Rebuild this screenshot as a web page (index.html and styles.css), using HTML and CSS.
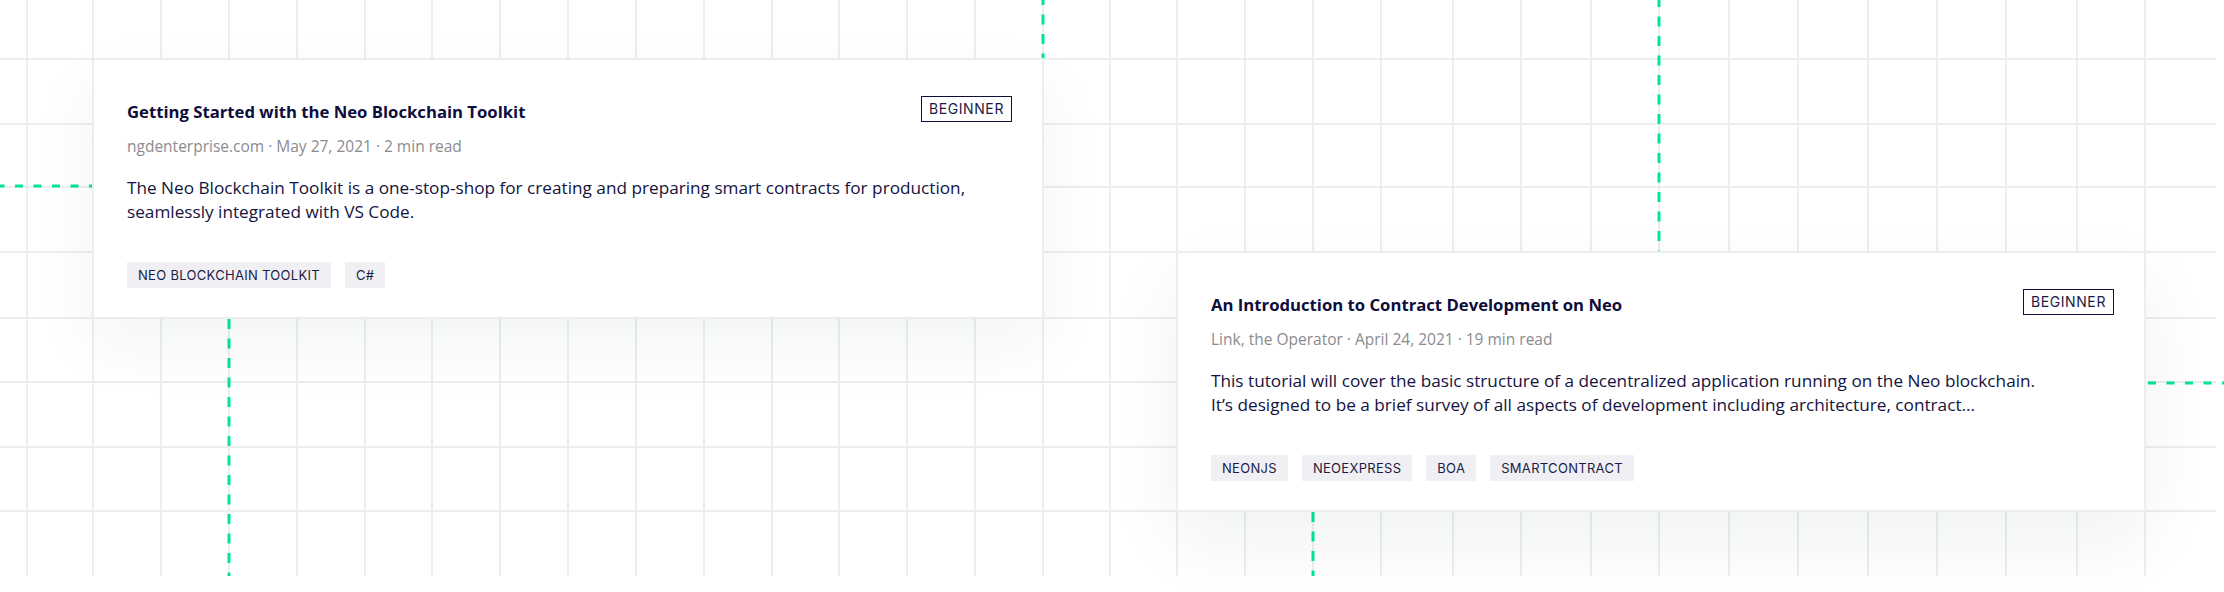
FILE: index.html
```html
<!DOCTYPE html>
<html lang="en">
<head>
<meta charset="utf-8">
<title>Neo tutorials</title>
<link rel="stylesheet" href="styles.css">
</head>
<body>
<main class="stage">
  <svg class="backdrop" width="2224" height="592" viewBox="0 0 2224 592" aria-hidden="true">
    <g class="grid-v" stroke="#eaeeee" stroke-width="2">
      <line x1="27" y1="0" x2="27" y2="576"/>
      <line x1="93" y1="0" x2="93" y2="576"/>
      <line x1="161" y1="0" x2="161" y2="576"/>
      <line x1="229" y1="0" x2="229" y2="576"/>
      <line x1="297" y1="0" x2="297" y2="576"/>
      <line x1="365" y1="0" x2="365" y2="576"/>
      <line x1="432" y1="0" x2="432" y2="576"/>
      <line x1="500" y1="0" x2="500" y2="576"/>
      <line x1="568" y1="0" x2="568" y2="576"/>
      <line x1="636" y1="0" x2="636" y2="576"/>
      <line x1="704" y1="0" x2="704" y2="576"/>
      <line x1="772" y1="0" x2="772" y2="576"/>
      <line x1="839" y1="0" x2="839" y2="576"/>
      <line x1="907" y1="0" x2="907" y2="576"/>
      <line x1="975" y1="0" x2="975" y2="576"/>
      <line x1="1043" y1="0" x2="1043" y2="576"/>
      <line x1="1110" y1="0" x2="1110" y2="576"/>
      <line x1="1177" y1="0" x2="1177" y2="576"/>
      <line x1="1245" y1="0" x2="1245" y2="576"/>
      <line x1="1313" y1="0" x2="1313" y2="576"/>
      <line x1="1381" y1="0" x2="1381" y2="576"/>
      <line x1="1453" y1="0" x2="1453" y2="576"/>
      <line x1="1521" y1="0" x2="1521" y2="576"/>
      <line x1="1591" y1="0" x2="1591" y2="576"/>
      <line x1="1659" y1="0" x2="1659" y2="576"/>
      <line x1="1729" y1="0" x2="1729" y2="576"/>
      <line x1="1798" y1="0" x2="1798" y2="576"/>
      <line x1="1868" y1="0" x2="1868" y2="576"/>
      <line x1="1937" y1="0" x2="1937" y2="576"/>
      <line x1="2006" y1="0" x2="2006" y2="576"/>
      <line x1="2077" y1="0" x2="2077" y2="576"/>
      <line x1="2145" y1="0" x2="2145" y2="576"/>
    </g>
    <g class="grid-h" stroke="#eaeeee" stroke-width="2">
      <line x1="0" y1="59" x2="2216" y2="59"/>
      <line x1="0" y1="124" x2="2216" y2="124"/>
      <line x1="0" y1="187" x2="2216" y2="187"/>
      <line x1="0" y1="252" x2="2216" y2="252"/>
      <line x1="0" y1="318" x2="2216" y2="318"/>
      <line x1="0" y1="382" x2="2216" y2="382"/>
      <line x1="0" y1="447" x2="2216" y2="447"/>
      <line x1="0" y1="511" x2="2216" y2="511"/>
    </g>
    <g class="dashes" stroke="#00e599" stroke-width="3" fill="none">
      <line x1="93" y1="186" x2="0" y2="186" stroke-dasharray="8 10.5" stroke-dashoffset="4"/>
      <line x1="1043" y1="0" x2="1043" y2="59" stroke-dasharray="10 9.5" stroke-dashoffset="5"/>
      <line x1="229" y1="318" x2="229" y2="576" stroke-dasharray="10 9.5" stroke-dashoffset="-1"/>
      <line x1="1659" y1="0" x2="1659" y2="252" stroke-dasharray="10 9.5" stroke-dashoffset="3"/>
      <line x1="2146" y1="383" x2="2224" y2="383" stroke-dasharray="8 10.5" stroke-dashoffset="-2"/>
      <line x1="1313" y1="512" x2="1313" y2="576" stroke-dasharray="10 9.5" stroke-dashoffset="0"/>
    </g>
  </svg>

  <article class="card card-one">
    <header class="card-head">
      <h2 class="card-title">Getting Started with the Neo Blockchain Toolkit</h2>
      <span class="level">BEGINNER</span>
    </header>
    <p class="card-meta">ngdenterprise.com · May 27, 2021 · 2 min read</p>
    <p class="card-desc">The Neo Blockchain Toolkit is a one-stop-shop for creating and preparing smart contracts for production,<br>seamlessly integrated with VS Code.</p>
    <ul class="tags">
      <li class="tag">NEO BLOCKCHAIN TOOLKIT</li>
      <li class="tag">C#</li>
    </ul>
  </article>

  <article class="card card-two">
    <header class="card-head">
      <h2 class="card-title">An Introduction to Contract Development on Neo</h2>
      <span class="level">BEGINNER</span>
    </header>
    <p class="card-meta">Link, the Operator · April 24, 2021 · 19 min read</p>
    <p class="card-desc">This tutorial will cover the basic structure of a decentralized application running on the Neo blockchain.<br>It’s designed to be a brief survey of all aspects of development including architecture, contract...</p>
    <ul class="tags">
      <li class="tag">NEONJS</li>
      <li class="tag">NEOEXPRESS</li>
      <li class="tag">BOA</li>
      <li class="tag">SMARTCONTRACT</li>
    </ul>
  </article>
</main>
</body>
</html>
```

FILE: styles.css
```css
* { box-sizing: border-box; }

html, body {
  margin: 0;
  padding: 0;
  background: #ffffff;
}

body {
  font-family: "Open Sans", "Noto Sans", sans-serif;
  color: #0f0e3c;
}

.stage {
  position: relative;
  width: 2224px;
  height: 592px;
  overflow: hidden;
  display: grid;
  grid-template-columns: 92px 952px 132px 970px 1fr;
  grid-template-rows: 58px 193px 68px 193px 1fr;
}

.backdrop {
  position: absolute;
  left: 0;
  top: 0;
  z-index: 0;
  display: block;
}

.card {
  position: relative;
  z-index: 1;
  background: #ffffff;
  border: 2px solid #eaeeee;
  box-shadow: 0 26px 64px rgba(20, 30, 40, 0.05);
  padding: 34px 30px 0 33px;
}

.card-one {
  grid-column: 2;
  grid-row: 2 / 4;
}

.card-two {
  grid-column: 4;
  grid-row: 3 / 5;
  box-shadow: 0 30px 70px rgba(20, 30, 40, 0.06);
}

.card-head {
  display: flex;
  justify-content: space-between;
  align-items: flex-start;
}

.card-title {
  margin: 6px 0 0;
  font-size: 16.7px;
  line-height: 24px;
  font-weight: 700;
  color: #0e0d3b;
}

.level {
  margin-top: 2px;
  height: 26px;
  padding: 0 7px;
  border: 1.5px solid #0e0d3b;
  font-family: Inter, "Liberation Sans", sans-serif;
  font-size: 14px;
  line-height: 23px;
  letter-spacing: 0.6px;
  color: #1c1b45;
}

.card-meta {
  margin: 12px 0 0;
  font-size: 15.5px;
  line-height: 20px;
  color: #8b8b8f;
}

.card-desc {
  margin: 20px 0 0;
  font-size: 17.2px;
  line-height: 24px;
  white-space: nowrap;
  color: #141340;
}

.tags {
  list-style: none;
  margin: 38px 0 0;
  padding: 0;
  display: flex;
  gap: 14px;
}

.tag {
  height: 26px;
  padding: 0 11px;
  background: #f0f0f4;
  font-family: Inter, "Liberation Sans", sans-serif;
  font-size: 13px;
  line-height: 26px;
  letter-spacing: 0.3px;
  color: #1c1b45;
}
```
